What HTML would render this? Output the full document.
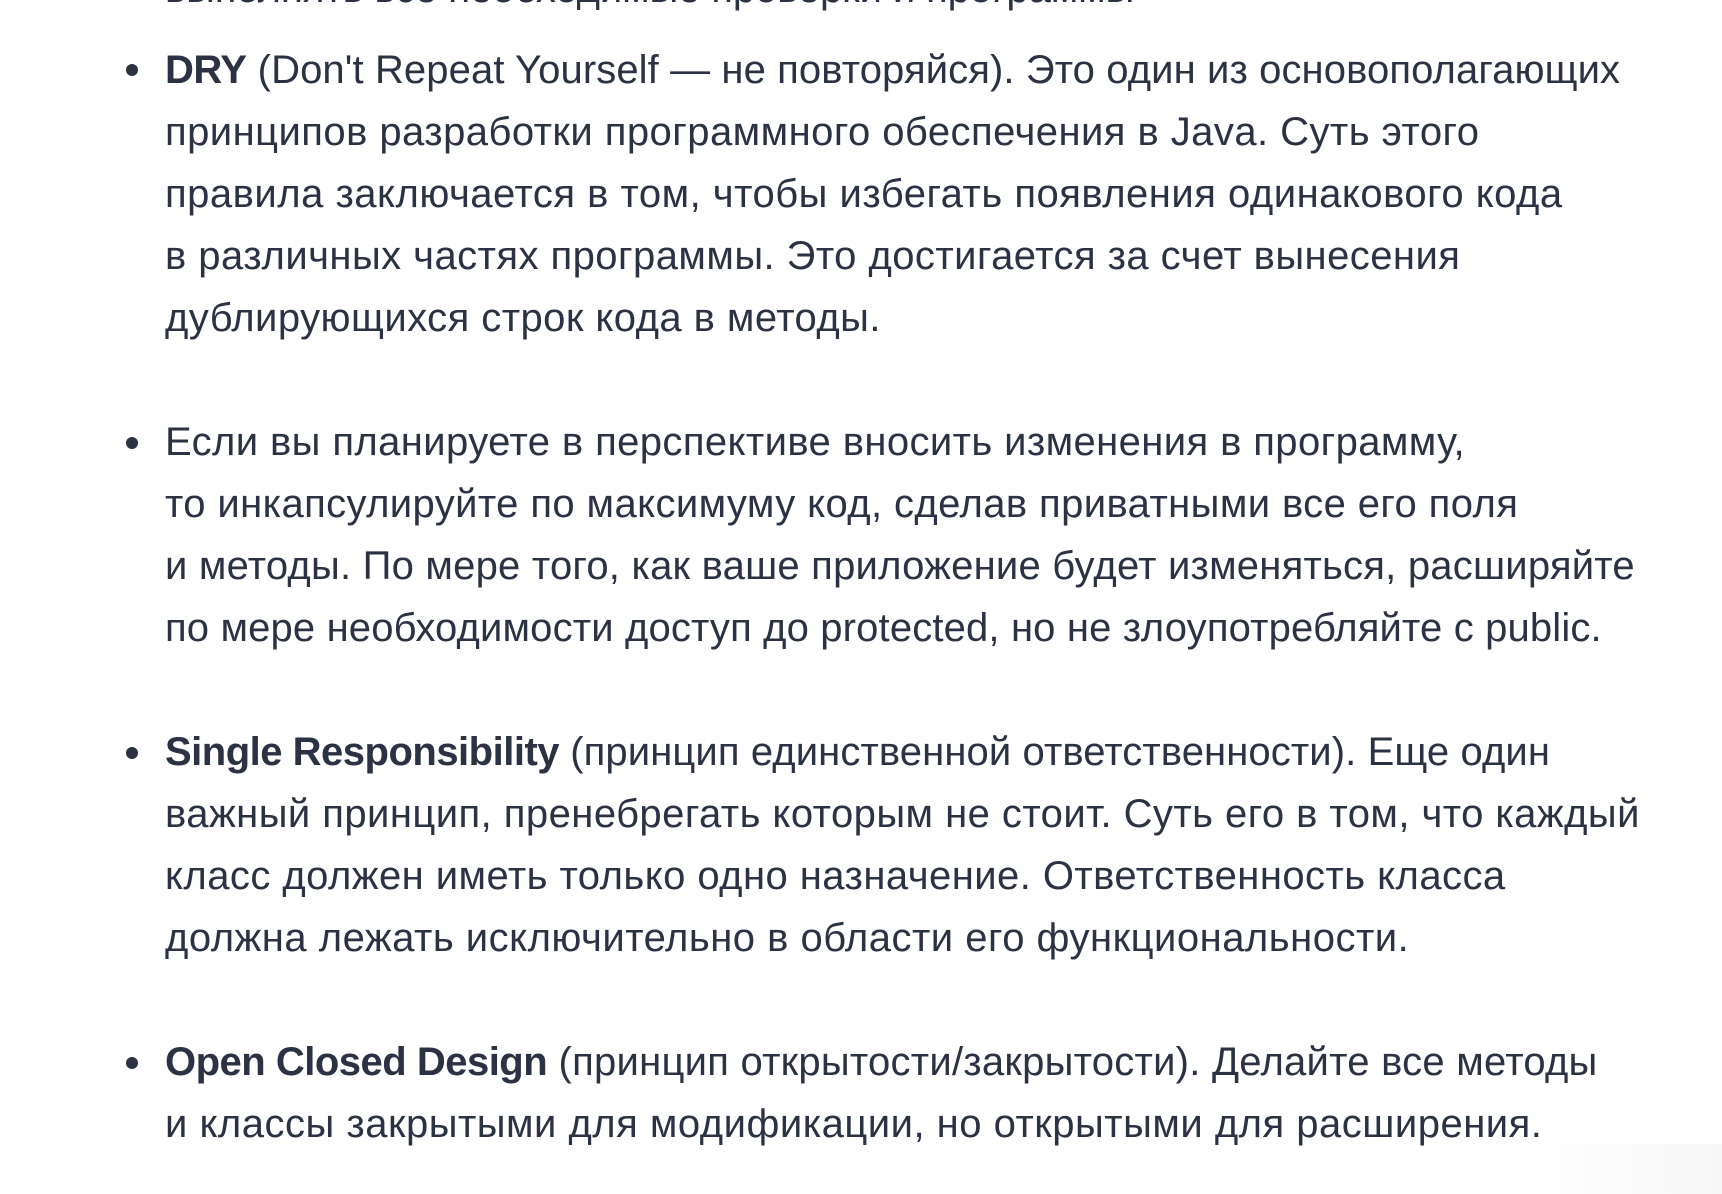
<!DOCTYPE html>
<html><head><meta charset="utf-8"><style>
body{margin:0;width:1722px;height:1194px;background:#fff;overflow:hidden;position:relative;font-family:"Liberation Sans",sans-serif;color:#2b3243;}
.l{position:absolute;left:165px;font-size:40px;line-height:62px;height:62px;white-space:nowrap;letter-spacing:-0.1px;}
.b{position:absolute;left:126px;width:12px;height:12px;border-radius:50%;background:#2b3243;}
b{font-weight:bold;letter-spacing:-0.5px;}
.fade{position:absolute;right:0;bottom:0;width:200px;height:50px;background:linear-gradient(90deg,#fff,#f7f7f8);}
</style></head><body>
<div class="l" style="top:-42px">выполнять все необходимые проверки и программы</div>
<div class="b" style="top:64px"></div>
<div class="l" style="top:39px;letter-spacing:0.1px"><b>DRY</b> (Don't Repeat Yourself — не повторяйся). Это один из основополагающих</div>
<div class="l" style="top:101px;letter-spacing:0.45px">принципов разработки программного обеспечения в Java. Суть этого</div>
<div class="l" style="top:163px;letter-spacing:0.5px">правила заключается в том, чтобы избегать появления одинакового кода</div>
<div class="l" style="top:225px;letter-spacing:0.45px">в различных частях программы. Это достигается за счет вынесения</div>
<div class="l" style="top:287px;letter-spacing:0.45px">дублирующихся строк кода в методы.</div>
<div class="b" style="top:437px"></div>
<div class="l" style="top:411px;letter-spacing:0.4px">Если вы планируете в перспективе вносить изменения в программу,</div>
<div class="l" style="top:473px;letter-spacing:0.4px">то инкапсулируйте по максимуму код, сделав приватными все его поля</div>
<div class="l" style="top:535px;letter-spacing:0.22px">и методы. По мере того, как ваше приложение будет изменяться, расширяйте</div>
<div class="l" style="top:597px;letter-spacing:0.15px">по мере необходимости доступ до protected, но не злоупотребляйте с public.</div>
<div class="b" style="top:747px"></div>
<div class="l" style="top:721px;letter-spacing:0.1px"><b>Single Responsibility</b> (принцип единственной ответственности). Еще один</div>
<div class="l" style="top:783px;letter-spacing:0.45px">важный принцип, пренебрегать которым не стоит. Суть его в том, что каждый</div>
<div class="l" style="top:845px;letter-spacing:0.45px">класс должен иметь только одно назначение. Ответственность класса</div>
<div class="l" style="top:907px;letter-spacing:0.5px">должна лежать исключительно в области его функциональности.</div>
<div class="b" style="top:1057px"></div>
<div class="l" style="top:1031px;letter-spacing:0.25px"><b>Open Closed Design</b> (принцип открытости/закрытости). Делайте все методы</div>
<div class="l" style="top:1093px;letter-spacing:0.5px">и классы закрытыми для модификации, но открытыми для расширения.</div>
<div class="fade"></div>
</body></html>
